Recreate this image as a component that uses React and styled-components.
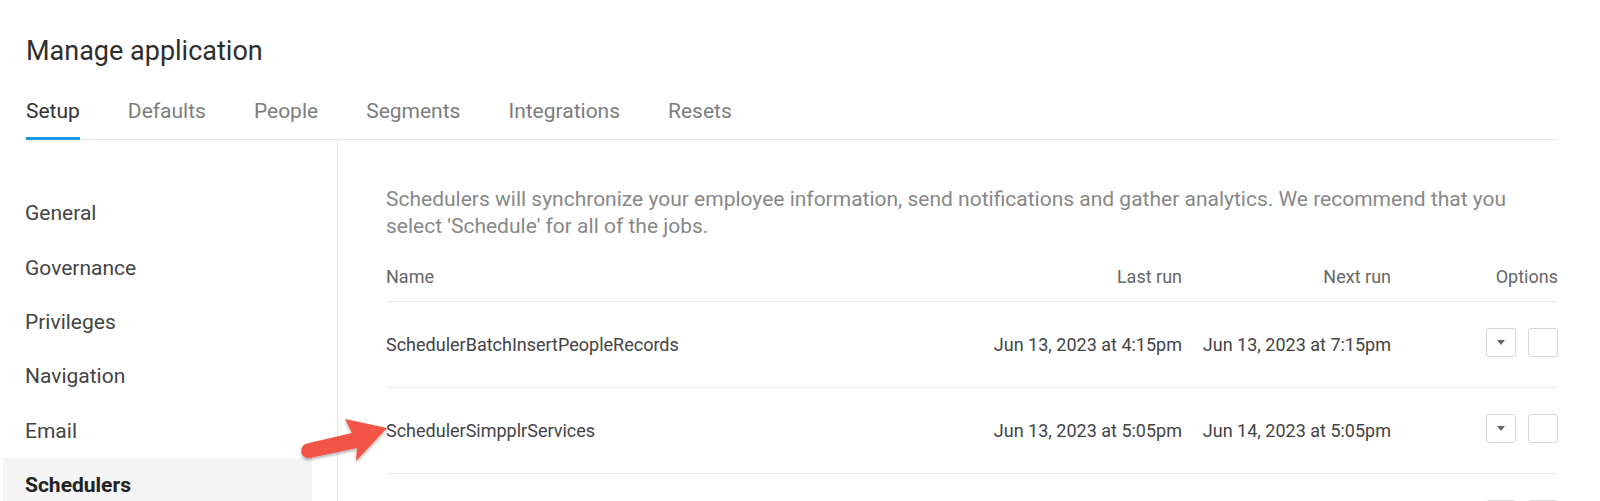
import React from "react";
import styled, { createGlobalStyle } from "styled-components";

const GlobalStyle = createGlobalStyle`
  html, body {
    margin: 0;
    padding: 0;
    background: #ffffff;
    font-family: Roboto, "Liberation Sans", Arial, sans-serif;
  }
`;

const Page = styled.div`
  position: relative;
  width: 1600px;
  height: 501px;
  overflow: hidden;
  background: #fff;
`;

const Header = styled.div`
  padding: 35px 42px 0 26px;
`;

const Title = styled.h1`
  margin: 0;
  font-size: 27px;
  line-height: 32px;
  font-weight: 400;
  color: #2e2e2e;
`;

const Tabs = styled.div`
  display: flex;
  gap: 48px;
  margin-top: 32px;
  border-bottom: 1px solid #e8e8e8;
`;

const Tab = styled.div`
  font-size: 21px;
  line-height: 24px;
  padding-bottom: 17px;
  margin-bottom: -1px;
  color: ${(p) => (p.$active ? "#333" : "#7d7d7d")};
  box-shadow: ${(p) => (p.$active ? "inset 0 -3px 0 #1b9ae4" : "none")};
`;

const Body = styled.div`
  display: flex;
  height: 361px;
`;

const Sidebar = styled.div`
  width: 334px;
  flex-shrink: 0;
  padding: 46px 0 0 3px;
  border-right: 1px solid #e8e8e8;
`;

const NavItem = styled.div`
  width: 309px;
  height: 54.4px;
  display: flex;
  align-items: center;
  padding-left: 22px;
  box-sizing: border-box;
  font-size: 21px;
  color: ${(p) => (p.$active ? "#222" : "#444")};
  font-weight: ${(p) => (p.$active ? 700 : 400)};
  background: ${(p) => (p.$active ? "#f4f4f4" : "transparent")};
`;

const Content = styled.div`
  flex: 1;
  padding: 46px 42px 0 48px;
`;

const Description = styled.p`
  margin: 0;
  max-width: 1150px;
  font-size: 21px;
  line-height: 27px;
  color: #888;
`;

const Row = styled.div`
  display: grid;
  grid-template-columns: 1fr 220px 209px 167px;
  align-items: center;
  border-bottom: 1px solid #ebebeb;
  font-size: 18px;
  color: ${(p) => (p.$head ? "#666" : "#444")};
  height: ${(p) => (p.$head ? "auto" : "85px")};
  margin-top: ${(p) => (p.$head ? "25px" : "0")};
  padding-bottom: ${(p) => (p.$head ? "12px" : "0")};
  line-height: 24px;
`;

const Cell = styled.div`
  text-align: ${(p) => (p.$right ? "right" : "left")};
  white-space: nowrap;
`;

const Options = styled.div`
  display: flex;
  justify-content: flex-end;
  gap: 12px;
  margin-bottom: 5px;
`;

const OptButton = styled.div`
  width: 30px;
  height: 29px;
  box-sizing: border-box;
  border: 1px solid #d6d6d6;
  border-radius: 3px;
  display: flex;
  align-items: center;
  justify-content: center;
`;

const Caret = styled.span`
  width: 0;
  height: 0;
  border-left: 4.5px solid transparent;
  border-right: 4.5px solid transparent;
  border-top: 5px solid #666;
`;

const Arrow = styled.svg`
  position: absolute;
  left: 290px;
  top: 400px;
  width: 110px;
  height: 80px;
  overflow: visible;
`;

const tabs = ["Setup", "Defaults", "People", "Segments", "Integrations", "Resets"];
const nav = ["General", "Governance", "Privileges", "Navigation", "Email", "Schedulers"];

const jobs = [
  { name: "SchedulerBatchInsertPeopleRecords", last: "Jun 13, 2023 at 4:15pm", next: "Jun 13, 2023 at 7:15pm" },
  { name: "SchedulerSimpplrServices", last: "Jun 13, 2023 at 5:05pm", next: "Jun 14, 2023 at 5:05pm" },
  { name: "", last: "", next: "" },
];

const App = () => {
  return (
    <Page>
      <GlobalStyle />
      <Header>
        <Title>Manage application</Title>
        <Tabs>
          {tabs.map((t) => (
            <Tab key={t} $active={t === "Setup"}>{t}</Tab>
          ))}
        </Tabs>
      </Header>
      <Body>
        <Sidebar>
          {nav.map((n) => (
            <NavItem key={n} $active={n === "Schedulers"}>{n}</NavItem>
          ))}
        </Sidebar>
        <Content>
          <Description>
            Schedulers will synchronize your employee information, send notifications and gather analytics. We recommend that you select 'Schedule' for all of the jobs.
          </Description>
          <Row $head>
            <Cell>Name</Cell>
            <Cell $right>Last run</Cell>
            <Cell $right>Next run</Cell>
            <Cell $right>Options</Cell>
          </Row>
          {jobs.map((j, i) => (
            <Row key={i}>
              <Cell>{j.name}</Cell>
              <Cell $right>{j.last}</Cell>
              <Cell $right>{j.next}</Cell>
              <Options>
                <OptButton><Caret /></OptButton>
                <OptButton />
              </Options>
            </Row>
          ))}
        </Content>
      </Body>
      {/* annotation arrow pointing at the second job */}
      <Arrow viewBox="0 0 110 80">
        <defs>
          <filter id="shadow" x="-20%" y="-20%" width="140%" height="160%">
            <feDropShadow dx="0" dy="2" stdDeviation="1.5" floodColor="#000" floodOpacity="0.3" />
          </filter>
        </defs>
        <path
          d="M17 43.5 L62 33 L55 19 L97 28 L66 61 L67 48 L20 58 A7.4 7.4 0 0 1 17 43.5 Z"
          fill="#f25545"
          filter="url(#shadow)"
        />
      </Arrow>
    </Page>
  );
};

export default App;
